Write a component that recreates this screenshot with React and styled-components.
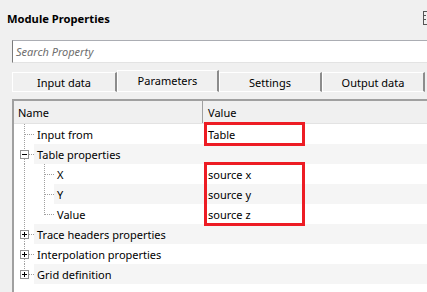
import React from 'react';
import styled, { createGlobalStyle } from 'styled-components';

const GlobalStyle = createGlobalStyle`
  html, body {
    margin: 0;
    padding: 0;
    overflow: hidden;
    background: #f0f0f0;
  }
  body {
    font-family: "Noto Sans", "Open Sans", sans-serif;
    font-size: 11px;
    color: #000;
  }
`

const Panel = styled.div`
  width: 427px;
  height: 292px;
  overflow: hidden;
  display: flex;
  flex-direction: column;
`

const TitleBar = styled.div`
  height: 36px;
  display: flex;
  align-items: center;
  padding-left: 7px;
`

const Title = styled.span`
  font-weight: 700;
  font-size: 11.2px;
`

const TitleIcon = styled.svg`
  margin-left: auto;
  flex-shrink: 0;
  transform: translateX(10px);
`

const SearchBox = styled.div`
  margin: 4px -20px 0 12px;
  height: 21px;
  background: #fff;
  border: 1px solid #abadb3;
  border-left-color: #7a7a7a;
  border-bottom-color: #e3e3e3;
  display: flex;
  align-items: center;
  padding-left: 3px;
  color: #6d6d6d;
  font-style: italic;
`

const TabStrip = styled.div`
  margin-top: 7px;
  height: 22px;
  padding-left: 12px;
  display: flex;
  align-items: flex-end;
`

const Tab = styled.div`
  box-sizing: border-box;
  width: ${({ width }) => width}px;
  height: ${({ active }) => (active ? 22 : 20)}px;
  display: flex;
  align-items: center;
  justify-content: center;
  padding-bottom: ${({ active }) => (active ? 2 : 0)}px;
  background: #f0f0f0;
  border-top: 1px solid #fff;
  border-left: 1px solid #fff;
  border-right: 2px solid #8c8c8c;
  border-bottom: 1px solid #fff;
  flex-shrink: 0;
`

const Table = styled.div`
  position: relative;
  margin: 7px 0 0 12px;
  flex: 1;
  background: #fff;
  border-top: 2px solid #a0a0a0;
  border-left: 2px solid #a0a0a0;
`

const Header = styled.div`
  height: 22px;
  display: flex;
  background: #f0f0f0;
  border-bottom: 1px solid #e3e3e3;
`

const HeaderCell = styled.div`
  box-sizing: border-box;
  display: flex;
  align-items: center;
  padding-left: ${({ first }) => (first ? 4 : 5)}px;
  width: ${({ first }) => (first ? '189px' : 'auto')};
  flex: ${({ first }) => (first ? 'none' : 1)};
  border-right: ${({ first }) => (first ? '1px solid #a0a0a0' : 'none')};
`

const Row = styled.div`
  height: 20px;
  display: flex;
`

const NameCell = styled.div`
  width: 189px;
  display: flex;
  flex-shrink: 0;
`

const Gutter = styled.svg`
  flex-shrink: 0;
  display: block;
`

const Label = styled.div`
  flex: 1;
  display: flex;
  align-items: center;
  padding-left: 3px;
  background: ${({ shaded }) => (shaded ? '#f5f5f5' : '#fff')};
  white-space: nowrap;
`

const ValueCell = styled.div`
  flex: 1;
  display: flex;
  align-items: center;
  padding-left: 5px;
  background: ${({ shaded }) => (shaded ? '#f5f5f5' : '#fff')};
`

const Highlight = styled.div`
  position: absolute;
  left: 190px;
  width: 101px;
  box-sizing: border-box;
  border: 3px solid #ed1c24;
  top: ${({ top }) => top}px;
  height: ${({ h }) => h}px;
`

const rows = [
  { label: 'Input from', value: 'Table', level: 0 },
  { label: 'Table properties', level: 0, box: 'minus' },
  { label: 'X', value: 'source x', level: 1 },
  { label: 'Y', value: 'source y', level: 1 },
  { label: 'Value', value: 'source z', level: 1, last: true },
  { label: 'Trace headers properties', level: 0, box: 'plus' },
  { label: 'Interpolation properties', level: 0, box: 'plus' },
  { label: 'Grid definition', level: 0, box: 'plus', rootEnd: true },
]

const dot = { stroke: '#a0a0a0', strokeWidth: 1, strokeDasharray: '1 1' }

const TreeLines = ({ level, box, last, rootEnd }) => {
  const w = level === 0 ? 20 : 40
  return (
    <Gutter width={w} height="20" viewBox={`0 0 ${w} 20`}>
      {/* root column */}
      {box ? (
        <>
          <line x1="10.5" y1="0" x2="10.5" y2="6" {...dot} />
          {!rootEnd && <line x1="10.5" y1="15" x2="10.5" y2="20" {...dot} />}
          <line x1="15" y1="10.5" x2="20" y2="10.5" {...dot} />
          <rect x="6.5" y="6.5" width="8" height="8" fill="#fff" stroke="#919191" />
          <line x1="8" y1="10.5" x2="13" y2="10.5" stroke="#000" />
          {box === 'plus' && <line x1="10.5" y1="8" x2="10.5" y2="13" stroke="#000" />}
        </>
      ) : (
        <>
          <line x1="10.5" y1="0" x2="10.5" y2="20" {...dot} />
          {level === 0 && <line x1="11" y1="10.5" x2="20" y2="10.5" {...dot} />}
        </>
      )}
      {level === 1 && (
        <>
          <line x1="30.5" y1="0" x2="30.5" y2={last ? 11 : 20} {...dot} />
          <line x1="31" y1="10.5" x2="40" y2="10.5" {...dot} />
        </>
      )}
    </Gutter>
  )
}

const App = () => (
  <>
    <GlobalStyle />
    <Panel>
      <TitleBar>
        <Title>Module Properties</Title>
        <TitleIcon width="14" height="14" viewBox="0 0 14 14">
          <rect x="0.5" y="0.5" width="13" height="13" fill="none" stroke="#555" />
          <line x1="0" y1="4.5" x2="3" y2="4.5" stroke="#555" />
          <line x1="0" y1="8.5" x2="3" y2="8.5" stroke="#555" />
        </TitleIcon>
      </TitleBar>
      <SearchBox>Search Property</SearchBox>
      <TabStrip>
        <Tab width={105}>Input data</Tab>
        <Tab width={102} active>Parameters</Tab>
        <Tab width={103}>Settings</Tab>
        <Tab width={103}>Output data</Tab>
      </TabStrip>
      <Table>
        <Header>
          <HeaderCell first>Name</HeaderCell>
          <HeaderCell>Value</HeaderCell>
        </Header>
        {rows.map((r, i) => (
          <Row key={r.label}>
            <NameCell>
              <TreeLines {...r} />
              <Label shaded={i % 2 === 1}>{r.label}</Label>
            </NameCell>
            <ValueCell shaded={i % 2 === 1}>{r.value}</ValueCell>
          </Row>
        ))}
        <Highlight top={21} h={24} />
        <Highlight top={61} h={64} />
      </Table>
    </Panel>
  </>
)

export default App
